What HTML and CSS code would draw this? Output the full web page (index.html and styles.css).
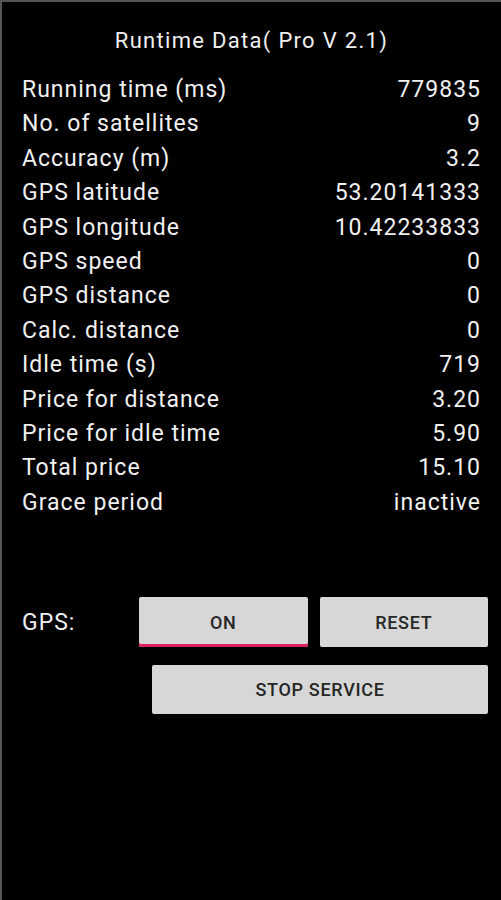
FILE: index.html
```html
<!DOCTYPE html>
<html lang="en">
<head>
    <meta charset="UTF-8">
    <meta name="viewport" content="width=device-width, initial-scale=1.0">
    <title>Runtime Data</title>
    <link rel="stylesheet" href="styles.css">
</head>
<body>
    <h1 class="title">Runtime Data( Pro V 2.1)</h1>

    <div class="data">
        <div class="row"><span>Running time (ms)</span><span>779835</span></div>
        <div class="row"><span>No. of satellites</span><span>9</span></div>
        <div class="row"><span>Accuracy (m)</span><span>3.2</span></div>
        <div class="row"><span>GPS latitude</span><span>53.20141333</span></div>
        <div class="row"><span>GPS longitude</span><span>10.42233833</span></div>
        <div class="row"><span>GPS speed</span><span>0</span></div>
        <div class="row"><span>GPS distance</span><span>0</span></div>
        <div class="row"><span>Calc. distance</span><span>0</span></div>
        <div class="row"><span>Idle time (s)</span><span>719</span></div>
        <div class="row"><span>Price for distance</span><span>3.20</span></div>
        <div class="row"><span>Price for idle time</span><span>5.90</span></div>
        <div class="row"><span>Total price</span><span>15.10</span></div>
        <div class="row"><span>Grace period</span><span>inactive</span></div>
    </div>

    <div class="controls">
        <span class="gps-label">GPS:</span>
        <button class="btn btn-on">ON</button>
        <button class="btn">RESET</button>
        <button class="btn btn-stop">STOP SERVICE</button>
    </div>
</body>
</html>
```

FILE: styles.css
```css
html {
    background-color: #000;
}
body {
    font-family: Roboto, "Noto Sans", sans-serif;
    margin: 0;
    height: 898px;
    background-color: #000;
    color: #f0f0f0;
    border-top: 2px solid #555;
    border-left: 2px solid #555;
}
.title {
    margin: 0;
    padding-top: 24px;
    font-size: 22px;
    font-weight: normal;
    letter-spacing: 1.3px;
    line-height: 30px;
    text-align: center;
}
.data {
    margin-top: 17px;
    padding: 0 21px 0 20px;
}
.row {
    display: flex;
    justify-content: space-between;
    font-size: 23px;
    letter-spacing: 1px;
    line-height: 34.4px;
}
.row span:last-child {
    margin-right: -1px;
}
.controls {
    display: grid;
    grid-template-columns: 105px 1fr 1fr;
    column-gap: 12px;
    row-gap: 18px;
    margin-top: 77px;
    padding: 0 13px 0 20px;
    align-items: center;
}
.gps-label {
    font-size: 23px;
    letter-spacing: 1px;
}
.btn {
    height: 50px;
    font-family: Roboto, "Noto Sans", sans-serif;
    font-size: 18px;
    font-weight: 500;
    letter-spacing: 0.7px;
    color: #262626;
    background-color: #d6d7d6;
    border: none;
    border-radius: 2px;
    padding: 0;
}
.btn-on {
    box-shadow: inset 0 -3px 0 #e0205f;
}
.btn-stop {
    grid-column: 2 / 4;
    margin-left: 13px;
    height: 49px;
}
```
